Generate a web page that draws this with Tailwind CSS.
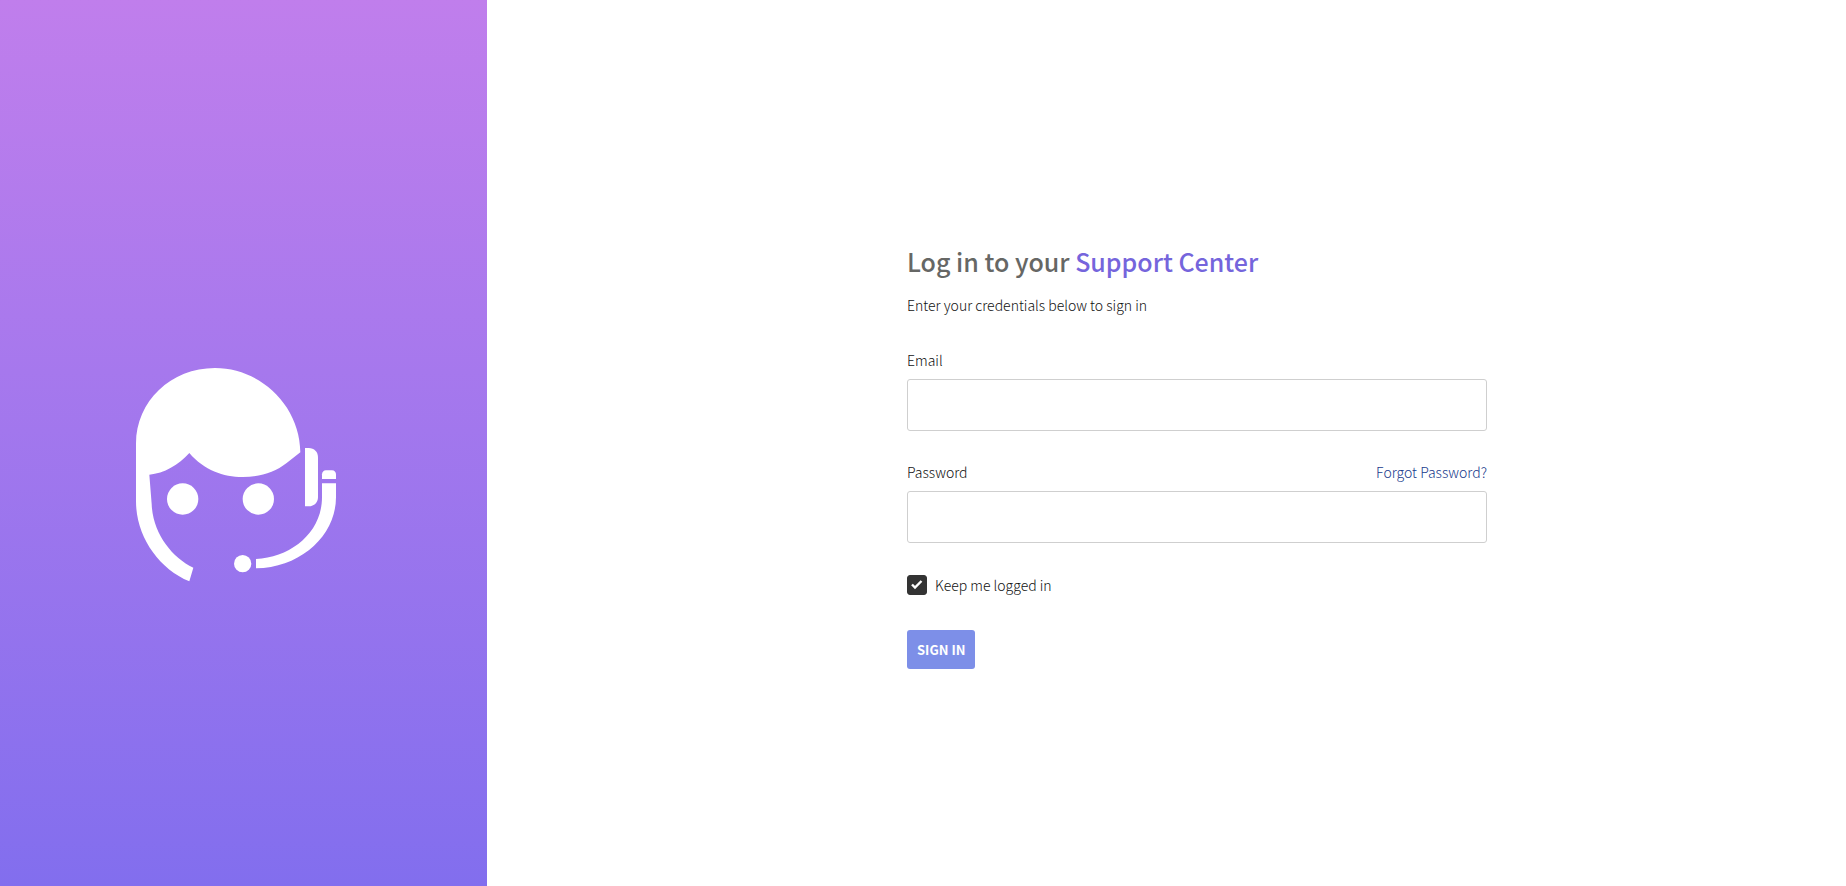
<!DOCTYPE html>
<html lang="en">
<head>
  <meta charset="UTF-8">
  <meta name="viewport" content="width=device-width, initial-scale=1.0">
  <title>Log in | Support Center</title>
  <script src="https://cdn.jsdelivr.net/npm/@tailwindcss/browser@4"></script>
</head>

<body class="min-h-screen flex bg-white text-sm leading-5 font-light text-[#111] font-['Noto_Sans_CJK_SC','Open_Sans',sans-serif]">
  <aside class="w-[487px] shrink-0 flex items-center justify-center pt-16 pr-4 bg-linear-to-b from-[#c07eec] to-[#826eee]">
    <!-- Support agent with headset -->
    <svg class="w-[200px]" viewBox="0 0 600 640" fill="#fff" aria-hidden="true">
      <path d="M0 227C0 100 105 0 237 0C372 0 492 112 493 253L452 285C416 313 372 327 320 327C262 327 205 307 160 255C128 291 84 316 40 320L47 408C50 495 107 568 172 599L160 640C68 602 0 505 0 400Z"/>
      <circle cx="140" cy="393" r="47"/>
      <circle cx="367" cy="393" r="47"/>
      <path d="M507 240H518C535 240 546 252 546 268V387C546 403 535 415 518 415H507Z"/>
      <path d="M558 333V319C558 312 563 307 570 307H588C595 307 600 312 600 319V333Z"/>
      <path d="M558 346H600V388C600 500 497 599 360 601V573C466 568 558 493 558 388Z"/>
      <circle cx="320" cy="587" r="26"/>
    </svg>
  </aside>

  <main class="flex-1 flex items-center justify-center pl-[61px]">
    <form class="w-full max-w-[580px] pt-[26px]">
      <h1 class="text-[25px] leading-9 font-medium text-[#666765]">Log in to your <span class="text-[#7565dc]">Support Center</span></h1>
      <p class="mt-4">Enter your credentials below to sign in</p>

      <label for="email" class="block mt-[35px]">Email</label>
      <input id="email" type="email" class="block w-full h-[52px] mt-[9px] px-4 border border-[#cfcfcf] rounded-[3px]">

      <div class="flex justify-between mt-[31px]">
        <label for="password">Password</label>
        <a href="#" class="text-[#17398c]">Forgot Password?</a>
      </div>
      <input id="password" type="password" class="block w-full h-[52px] mt-[9px] px-4 border border-[#cfcfcf] rounded-[3px]">

      <div class="flex items-center gap-2 mt-8">
        <span class="relative flex">
          <input id="keep" type="checkbox" checked class="peer size-5 appearance-none rounded-[3px] border border-[#333] checked:bg-[#333]">
          <svg class="absolute inset-0 hidden peer-checked:block pointer-events-none" viewBox="0 0 20 20" fill="none" stroke="#fff" stroke-width="2.4" aria-hidden="true">
            <path d="M5 9.500L8 12.500L14.500 6"/>
          </svg>
        </span>
        <label for="keep">Keep me logged in</label>
      </div>

      <button type="submit" class="h-[39px] mt-[35px] px-[10px] rounded-[3px] bg-[#7d8fe8] text-white text-[13px] font-bold">SIGN IN</button>
    </form>
  </main>
</body>
</html>
